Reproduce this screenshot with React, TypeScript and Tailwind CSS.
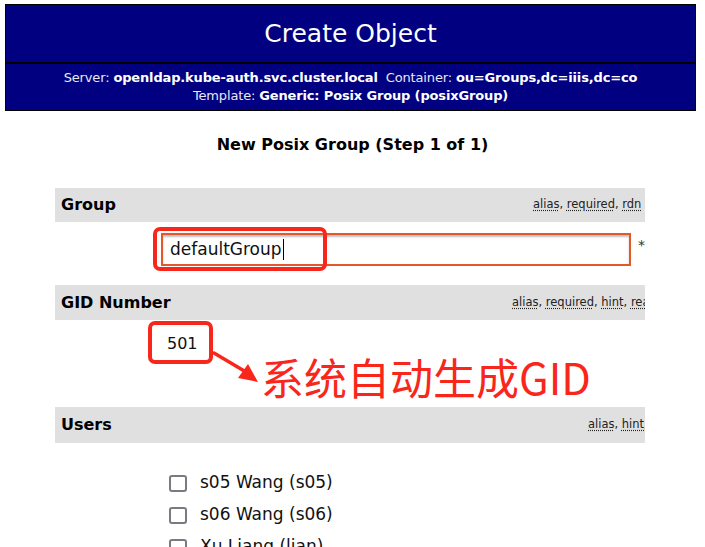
const RED = 'border-[#f9261b]'

interface FieldBarProps {
  label: string
  flags: string[]
  flagsWidth: string
  height: string
}

// gray attribute header with the dotted "alias, required…" hints on the right
function FieldBar({ label, flags, flagsWidth, height }: FieldBarProps) {
  return (
    <div className={`flex items-center bg-[#e0e0e0] ${height}`}>
      <div className="flex-1 pl-[6px] text-[16px] font-bold text-black">{label}</div>
      <div className={`overflow-hidden whitespace-nowrap text-[11.5px] text-[#222] ${flagsWidth}`}>
        {flags.map((f, i) => (
          <span key={f}>
            <span className="underline decoration-dotted underline-offset-2">{f}</span>
            {i < flags.length - 1 ? ', ' : ''}
          </span>
        ))}
      </div>
    </div>
  )
}

function UserRow({ name }: { name: string }) {
  return (
    <div className="flex h-[32px] items-center pl-[114px]">
      <span className="h-[17px] w-[18px] rounded-[3px] border-2 border-[#7a7a80] bg-white" />
      <span className="ml-[13px] text-[17px] text-[#111]">{name}</span>
    </div>
  )
}

export default function App() {
  return (
    <div className="relative h-[547px] overflow-hidden bg-white font-['DejaVu_Sans',sans-serif]">
      {/* Header */}
      <div className="ml-[5px] mt-[4px] w-[691px] border border-black bg-[#000080] text-white">
        <div className="flex h-[57px] items-center justify-center text-[25px]">Create Object</div>
        <div className="border-t-2 border-black pb-[5px] pt-[5px] text-center text-[13px] leading-[18px] tracking-[-0.15px]">
          <div>
            <span className="text-[#e8e8f0]">Server: </span>
            <span className="font-bold">openldap.kube-auth.svc.cluster.local</span>
            <span className="ml-[8px] text-[#e8e8f0]">Container: </span>
            <span className="font-bold">ou=Groups,dc=iiis,dc=co</span>
          </div>
          <div>
            <span className="text-[#e8e8f0]">Template: </span>
            <span className="font-bold">Generic: Posix Group (posixGroup)</span>
          </div>
        </div>
      </div>

      <h3 className="mt-[24px] text-center text-[16px] font-bold leading-[19px] text-black">
        New Posix Group (Step 1 of 1)
      </h3>

      <div className="ml-[55px] mt-[34px] w-[590px]">
        <FieldBar label="Group" flags={['alias', 'required', 'rdn']} flagsWidth="w-[112px]" height="h-[34px]" />
        <div className="flex h-[63px] items-start pl-[106px] pt-[11px]">
          <div className="flex h-[33px] w-[471px] items-center border-2 border-[#e2582b] bg-white pl-[7px] text-[17px] text-[#111] shadow-[inset_0_2px_2px_rgba(0,0,0,0.25)]">
            defaultGroup<span className="ml-[1px] h-[21px] w-[1px] bg-black" />
          </div>
          <span className="ml-[7px] mt-[2px] text-[14px] text-[#333]">*</span>
        </div>

        <FieldBar
          label="GID Number"
          flags={['alias', 'required', 'hint', 'readonly']}
          flagsWidth="w-[133px]"
          height="h-[35px]"
        />
        <div className="h-[87px] pl-[112px] pt-[14px] text-[16px] leading-[19px] text-[#111]">501</div>

        <FieldBar label="Users" flags={['alias', 'hint', 'multiple']} flagsWidth="w-[57px]" height="h-[36px]" />
        <div className="pt-[24px]">
          <UserRow name="s05 Wang (s05)" />
          <UserRow name="s06 Wang (s06)" />
          <UserRow name="Xu Liang (lian)" />
        </div>
      </div>

      {/* red annotations drawn over the page */}
      <div className={`absolute left-[153px] top-[227px] h-[44px] w-[174px] rounded-[7px] border-4 ${RED}`} />
      <div className={`absolute left-[148px] top-[321px] h-[43px] w-[65px] rounded-[7px] border-4 ${RED}`} />
      <svg className="absolute left-[210px] top-[348px]" width="56" height="40" viewBox="0 0 56 40">
        <line x1="4" y1="5" x2="36" y2="24" stroke="#f9261b" strokeWidth="3.5" strokeLinecap="round" />
        <polygon points="48,34 28,30 38,16" fill="#f9261b" />
      </svg>
      <div className="absolute left-[261px] top-[355px] whitespace-nowrap font-['Noto_Sans_CJK_SC',sans-serif] text-[43px] leading-none text-[#f9261b]">
        系统自动生成GID
      </div>
    </div>
  )
}
